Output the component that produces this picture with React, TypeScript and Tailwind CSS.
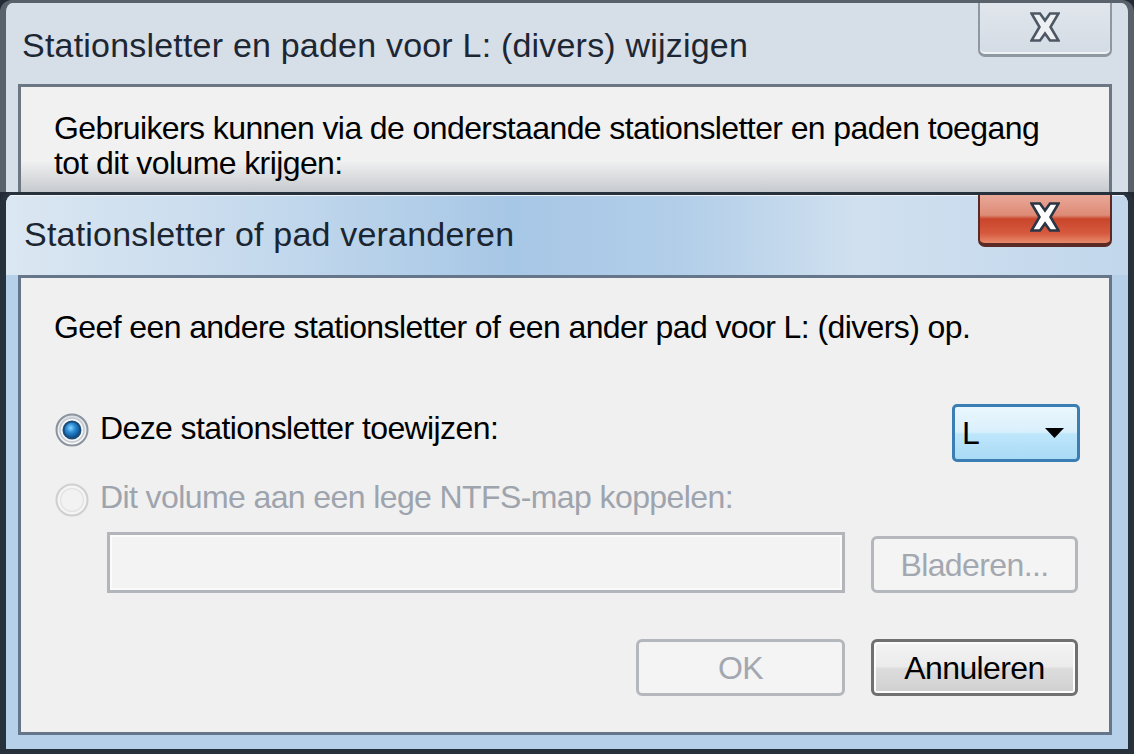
import React from 'react';

const CloseGlyph: React.FC<{ fill: string; stroke: string }> = ({ fill, stroke }) => (
  <svg width="30" height="30" viewBox="0 0 30 30">
    <polygon
      points="1.5,1.5 10,1.5 15,8.5 20,1.5 28.5,1.5 20.5,15 28.5,28.5 20,28.5 15,21.5 10,28.5 1.5,28.5 9.5,15"
      fill={fill}
      stroke={stroke}
      strokeWidth="2.6"
      strokeLinejoin="miter"
    />
  </svg>
);

const Radio: React.FC<{ checked?: boolean; disabled?: boolean }> = ({ checked, disabled }) => (
  <svg width="34" height="34" viewBox="0 0 34 34" className="shrink-0">
    <defs>
      <linearGradient id="ring" x1="0" y1="0" x2="0" y2="1">
        <stop offset="0" stopColor="#d9dee4" />
        <stop offset="1" stopColor="#fbfbfc" />
      </linearGradient>
      <radialGradient id="dot" cx="0.42" cy="0.38" r="0.6">
        <stop offset="0" stopColor="#8ad6ff" />
        <stop offset="0.45" stopColor="#2a8ad4" />
        <stop offset="1" stopColor="#0c4a86" />
      </radialGradient>
    </defs>
    {disabled ? (
      <>
        <circle cx="17" cy="17" r="15.5" fill="#f5f5f5" stroke="#cfcfcf" strokeWidth="2" />
        <circle cx="17" cy="17" r="11.5" fill="#f2f2f2" stroke="#e4e4e4" strokeWidth="1.5" />
      </>
    ) : (
      <>
        <circle cx="17" cy="17" r="15.5" fill="url(#ring)" stroke="#8b949e" strokeWidth="2" />
        <circle cx="17" cy="17" r="12" fill="#f4f5f6" stroke="#c3c8ce" strokeWidth="1.5" />
        {checked && <circle cx="17" cy="17" r="8.5" fill="url(#dot)" stroke="#1b4c7a" strokeWidth="2" />}
      </>
    )}
  </svg>
);

export default function App() {
  return (
    <div className="w-[1134px] h-[754px] overflow-hidden bg-[#222b35] font-['Liberation_Sans',Arial,sans-serif]">
      {/* achterste venster */}
      <div className="h-[192px] flex flex-col overflow-hidden rounded-t-[12px] border-t-[3px] border-x-[6px] border-[#59616b] bg-[#d6dee7]">
        <div className="h-[81px] shrink-0 flex items-start justify-between pl-[16px] pr-[16px]">
          <div className="mt-[22px] text-[34px] leading-[40px] tracking-[0.2px] text-[#1d2733] whitespace-nowrap">
            Stationsletter en paden voor L: (divers) wijzigen
          </div>
          <div className="-mt-[3px] w-[134px] h-[57px] flex items-center justify-center rounded-b-[7px] border-x-[2px] border-b-[3px] border-[#8f97a1] bg-[linear-gradient(to_bottom,#e2e7ed,#d3dbe4)] shadow-[inset_0_-2px_0_#eef2f5]">
            <CloseGlyph fill="#eef1f4" stroke="#4e5865" />
          </div>
        </div>
        <div className="flex-1 ml-[12px] mr-[16px] border-t-[3px] border-x-[3px] border-[#6c7784] bg-[linear-gradient(to_bottom,#f1f1f1_70%,#c6cacf)] pl-[33px] pt-[24px] text-[32px] leading-[35px] tracking-[-0.6px] text-black">
          <div className="whitespace-nowrap">Gebruikers kunnen via de onderstaande stationsletter en paden toegang</div>
          <div className="whitespace-nowrap">tot dit volume krijgen:</div>
        </div>
      </div>

      {/* voorste venster */}
      <div className="h-[562px] flex flex-col overflow-hidden rounded-t-[12px] border-t-[3px] border-x-[6px] border-b-[5px] border-[#27313c] bg-[#b7d0ea]">
        <div className="h-[80px] shrink-0 flex items-start justify-between pl-[18px] pr-[16px] bg-[linear-gradient(90deg,#dbe7f2_0%,#c6daed_22%,#a7c7e6_45%,#b2cee9_60%,#d0e0ef_76%,#c2d7ec_100%)] shadow-[inset_0_1px_0_#eef4fa]">
          <div className="mt-[19px] text-[34px] leading-[40px] tracking-[0.2px] text-[#1b2530] whitespace-nowrap">
            Stationsletter of pad veranderen
          </div>
          <div className="w-[134px] h-[52px] flex items-center justify-center pb-[4px] rounded-b-[7px] border-x-[2px] border-b-[4px] border-[#5c2a24] bg-[linear-gradient(to_bottom,#eaa898_0%,#dd8b76_42%,#c9452b_50%,#d65a3e_80%,#e88a6c_100%)]">
            <CloseGlyph fill="#ffffff" stroke="#2b3544" />
          </div>
        </div>

        <div className="h-[460px] shrink-0 ml-[12px] mr-[16px] flex flex-col border-[3px] border-[#65768a] bg-[#f0f0f0] pl-[33px] pr-[31px] pt-[31px] text-[32px] leading-[36px] tracking-[-0.6px] text-black">
          <div className="whitespace-nowrap">Geef een andere stationsletter of een ander pad voor L: (divers) op.</div>

          <div className="mt-[59px] h-[58px] flex items-start">
            <div className="ml-[1px] mt-[9px]">
              <Radio checked />
            </div>
            <div className="ml-[11px] mt-[6px] whitespace-nowrap">Deze stationsletter toewijzen:</div>
            <div className="ml-auto -mr-[2px] w-[128px] h-[58px] flex items-center justify-between pl-[7px] pr-[13px] rounded-[5px] border-[3px] border-[#3b7eb3] bg-[linear-gradient(to_bottom,#eaf6fd_0%,#d9f0fc_48%,#bee6fb_52%,#a9dbf6_100%)]">
              <span>L</span>
              <svg width="19" height="10" viewBox="0 0 19 10">
                <polygon points="0,0 19,0 9.5,10" fill="#000" />
              </svg>
            </div>
          </div>

          <div className="mt-[17px] h-[36px] flex items-start text-[#9ea4ad]">
            <div className="ml-[1px] mt-[4px]">
              <Radio disabled />
            </div>
            <div className="ml-[11px] whitespace-nowrap">Dit volume aan een lege NTFS-map koppelen:</div>
          </div>

          <div className="mt-[17px] flex items-end">
            <div className="ml-[53px] w-[738px] h-[61px] border-[3px] border-[#b2b5b9] bg-[#f3f3f3] shadow-[inset_0_0_0_2px_#fbfbfb]" />
            <div className="ml-[26px] w-[207px] h-[57px] flex items-center justify-center rounded-[6px] border-[3px] border-[#b4b8bc] bg-[#f4f4f4] text-[#a3a8b0]">
              Bladeren...
            </div>
          </div>

          <div className="mt-[46px] flex justify-end gap-[26px]">
            <div className="w-[209px] h-[57px] flex items-center justify-center rounded-[6px] border-[3px] border-[#b4b8bc] bg-[#f4f4f4] text-[#a3a8b0]">
              OK
            </div>
            <div className="w-[207px] h-[57px] flex items-center justify-center rounded-[6px] border-[3px] border-[#707070] bg-[linear-gradient(to_bottom,#f3f3f3_0%,#ebebeb_48%,#dddddd_52%,#cfcfcf_100%)] shadow-[inset_0_0_0_2px_#fcfcfc]">
              Annuleren
            </div>
          </div>
        </div>
      </div>
    </div>
  );
}
